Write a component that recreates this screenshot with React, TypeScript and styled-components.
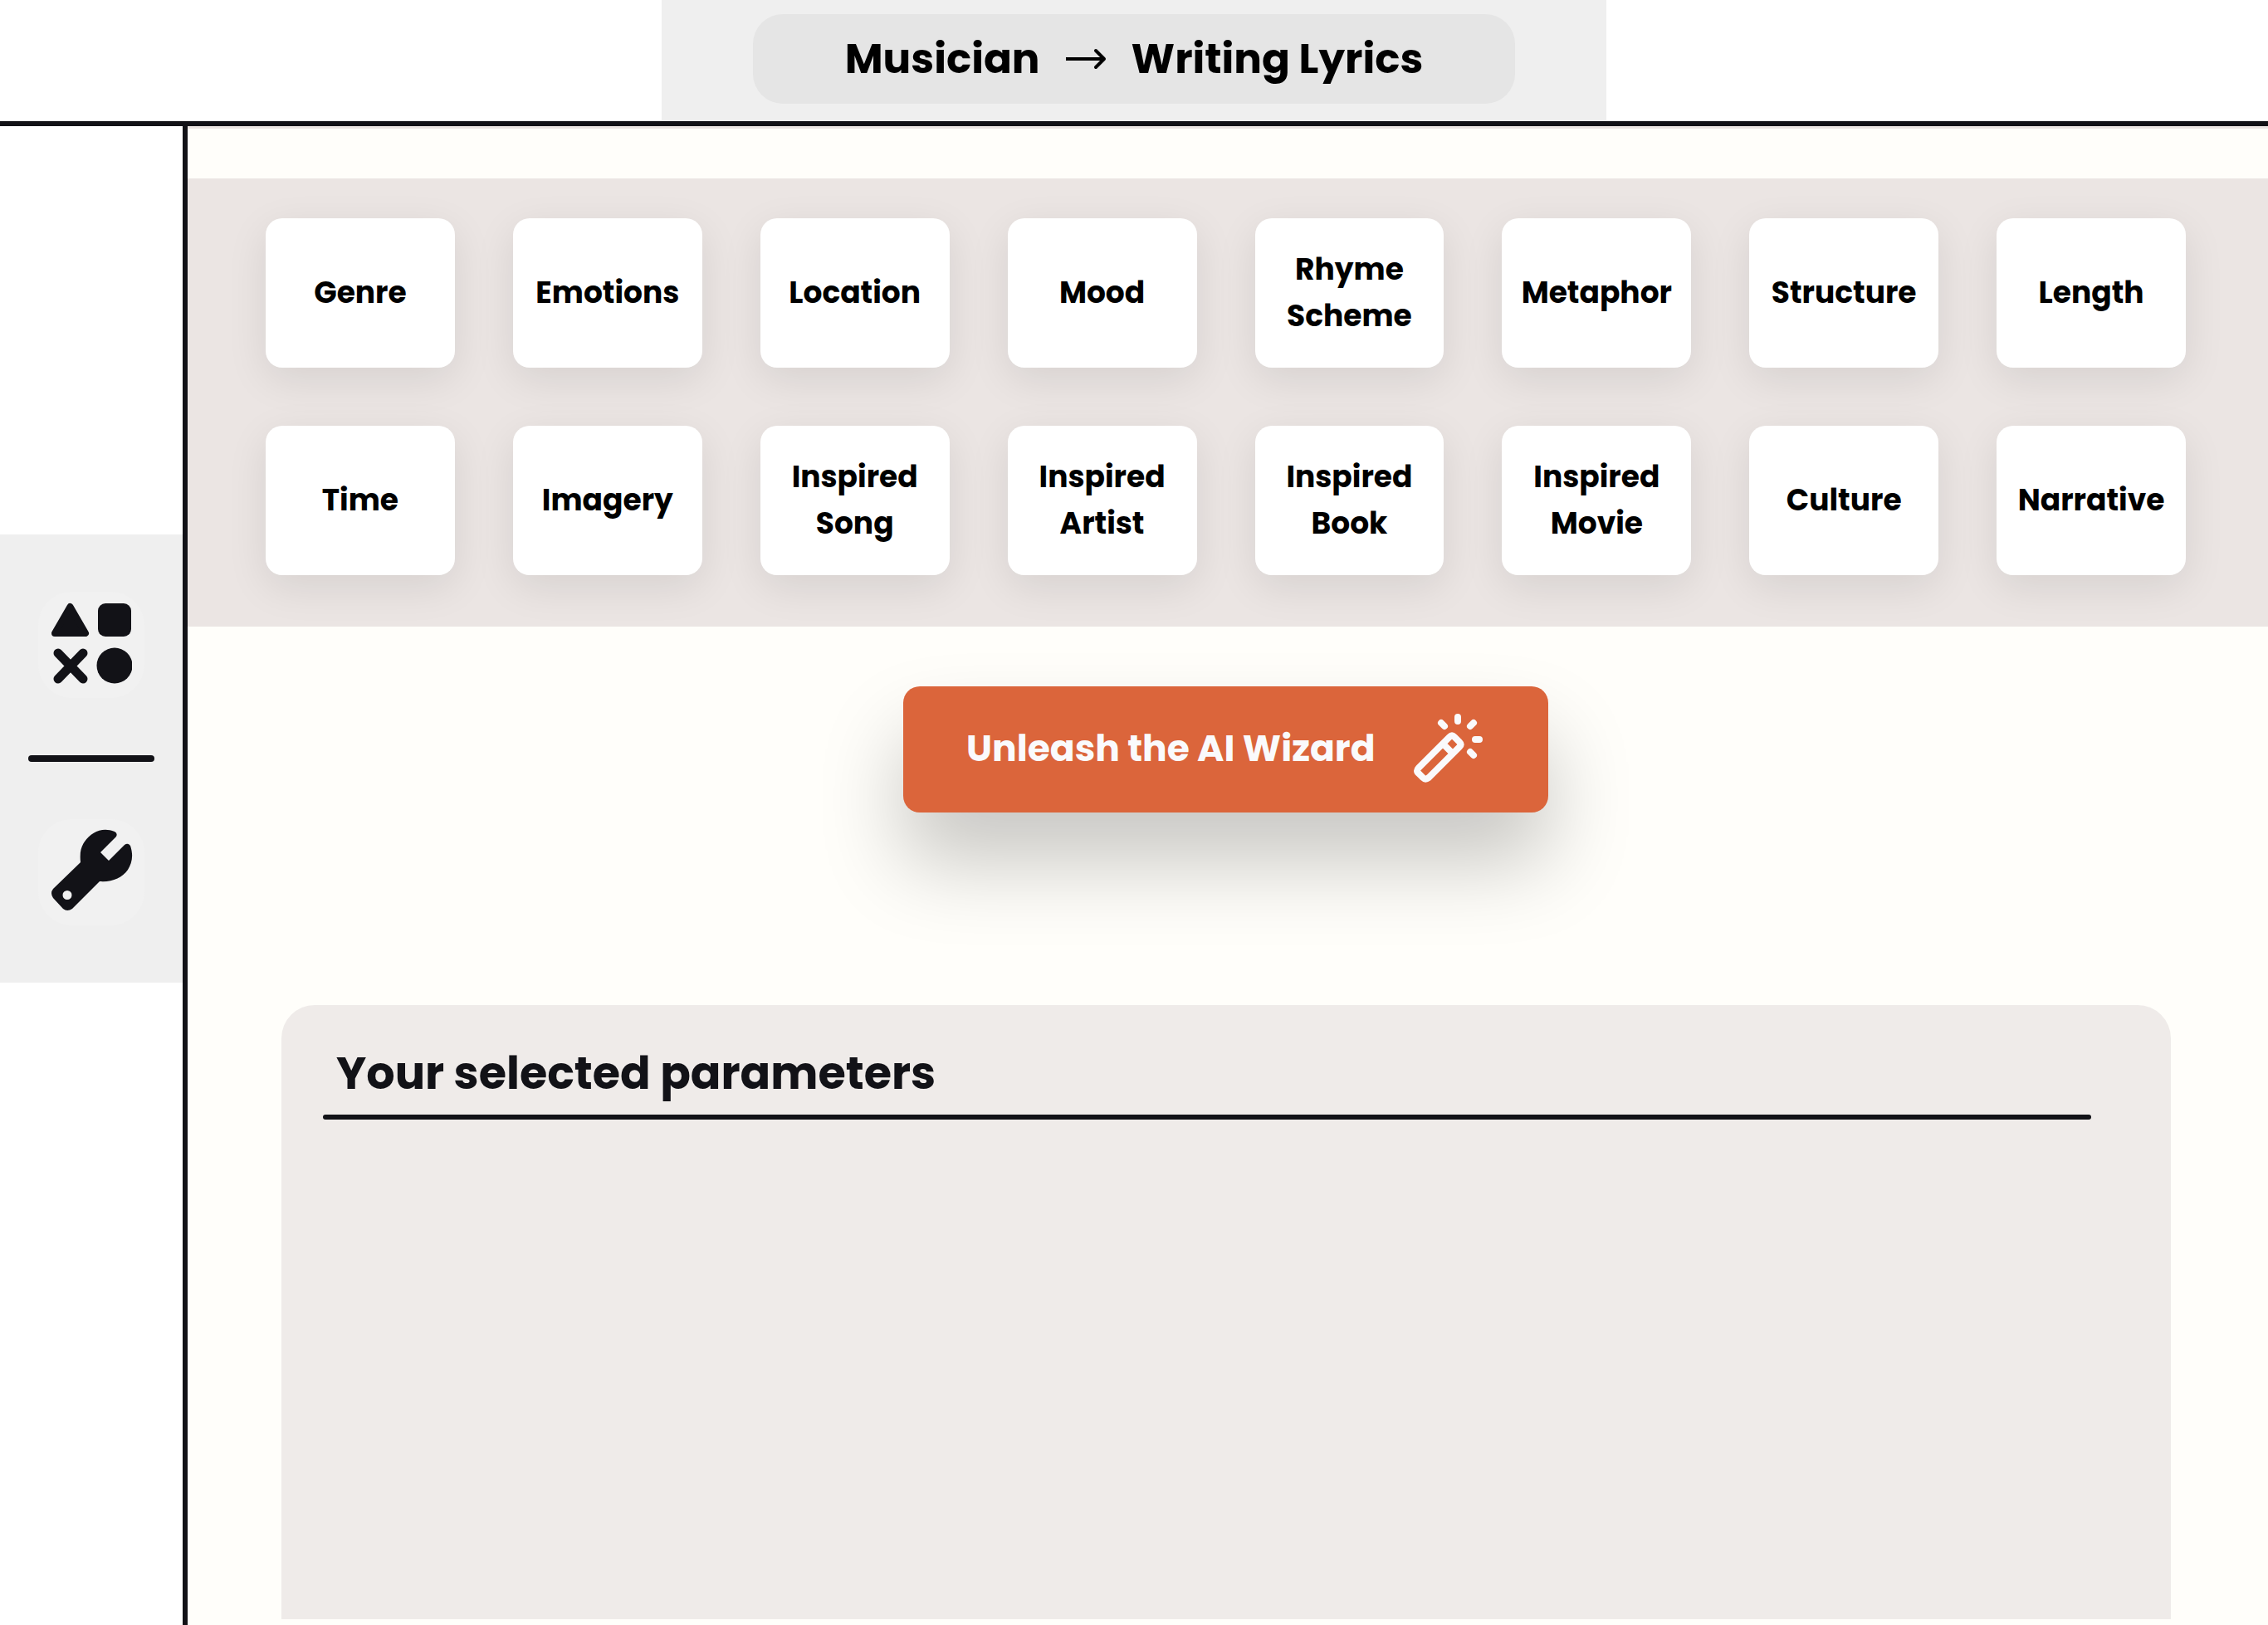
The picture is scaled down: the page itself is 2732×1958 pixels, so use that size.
import React from "react";
import styled, { createGlobalStyle } from "styled-components";

const ink = "#121217";
const cream = "#fffefa";
const sand = "#ebe5e3";

const GlobalStyle = createGlobalStyle`
  *, *::before, *::after { box-sizing: border-box; }
  body {
    margin: 0;
    background: #ffffff;
    color: #000000;
    font-family: Poppins, Inter, "Liberation Sans", sans-serif;
  }
  button { font: inherit; border: 0; cursor: pointer; }
`;

const Page = styled.div`
  display: flex;
  flex-direction: column;
  min-height: 100vh;
`;

const Header = styled.header`
  display: flex;
  justify-content: center;
  border-bottom: 6px solid ${ink};
`;

const HeaderPanel = styled.div`
  padding: 17px 110px 21px;
  background: #efefef;
`;

const Breadcrumb = styled.nav`
  display: flex;
  align-items: center;
  justify-content: center;
  gap: 30px;
  width: 918px;
  height: 108px;
  border-radius: 36px;
  background: #e5e5e5;
  font-size: 50px;
  font-weight: 700;
`;

const Body = styled.div`
  display: flex;
  flex: 1;
`;

const Sidebar = styled.aside`
  flex: none;
  width: 226px;
  padding-top: 492px;
  border-right: 6px solid ${ink};
`;

const ToolPanel = styled.div`
  display: flex;
  flex-direction: column;
  align-items: center;
  justify-content: space-evenly;
  height: 540px;
  background: #efefef;
`;

const ToolButton = styled.button`
  display: grid;
  place-items: center;
  width: 128px;
  height: 128px;
  padding: 0 0 4px;
  border-radius: 40px;
  background: #f1f1f1;
  color: ${ink};
`;

const ToolDivider = styled.hr`
  width: 152px;
  height: 8px;
  margin: 0;
  border: 0;
  border-radius: 4px;
  background: ${ink};
`;

const Main = styled.main`
  display: flex;
  flex: 1;
  flex-direction: column;
  padding-top: 60px;
  border-top: 3px solid ${sand};
  background: ${cream};
`;

const ParameterBand = styled.section`
  display: grid;
  grid-template-columns: repeat(8, 1fr);
  gap: 70px;
  padding: 48px 99px 62px 94px;
  background: ${sand};
`;

const ParameterCard = styled.button`
  height: 180px;
  padding: 0 16px;
  border-radius: 20px;
  background: #ffffff;
  box-shadow: 0 14px 50px rgba(0, 0, 0, 0.09);
  color: #000000;
  font-size: 36px;
  font-weight: 700;
  line-height: 56px;
`;

const ActionRow = styled.div`
  display: flex;
  justify-content: center;
  padding: 72px 99px 232px 94px;
`;

const WizardButton = styled.button`
  display: flex;
  align-items: center;
  justify-content: space-between;
  width: 777px;
  height: 152px;
  padding: 0 78px 4px 76px;
  border-radius: 20px;
  background: #db653b;
  box-shadow: 0 60px 100px rgba(0, 0, 0, 0.22);
  color: #fafafc;
  font-size: 44px;
  font-weight: 700;
`;

const SelectionPanel = styled.section`
  flex: 1;
  min-height: 740px;
  margin: 0 117px 7px 113px;
  padding: 50px 96px 48px 50px;
  border-radius: 40px 40px 0 0;
  background: #efebe9;
`;

const SelectionTitle = styled.h2`
  margin: 0;
  padding: 0 16px 18px;
  color: ${ink};
  font-size: 54px;
  font-weight: 700;
  line-height: 64px;
`;

const SelectionRule = styled.hr`
  height: 6px;
  margin: 0;
  border: 0;
  border-radius: 3px;
  background: ${ink};
`;

const parameters = [
  "Genre", "Emotions", "Location", "Mood",
  "Rhyme Scheme", "Metaphor", "Structure", "Length",
  "Time", "Imagery", "Inspired Song", "Inspired Artist",
  "Inspired Book", "Inspired Movie", "Culture", "Narrative",
];

const ArrowIcon = () => (
  <svg width="50" height="26" viewBox="0 0 50 26" fill="none" stroke="currentColor" strokeWidth="4" aria-hidden="true">
    <path d="M1 13H46" />
    <path d="M37 3L47 13L37 23" strokeLinecap="round" strokeLinejoin="round" />
  </svg>
);

const ShapesIcon = () => (
  <svg width="98" height="98" viewBox="0 0 98 98" fill="currentColor" aria-hidden="true">
    <path d="M23.500 5L42 37H5Z" stroke="currentColor" strokeWidth="8" strokeLinejoin="round" />
    <rect x="57" y="1" width="40" height="40" rx="9" />
    <path d="M9 61L39 92M39 61L9 92" stroke="currentColor" strokeWidth="11" strokeLinecap="round" />
    <circle cx="77" cy="76" r="21.500" />
  </svg>
);

const WrenchIcon = () => (
  <svg width="102" height="102" viewBox="0 0 102 102" fill="currentColor" aria-hidden="true">
    <path
      fillRule="evenodd"
      d="M79 4Q83 6 81 10L62 29L72 39L91 20Q95 17 98 21C102 33 100 42 95 50C88 60 76 65 61 64L28 97Q22 101 17 97L5 84Q1 78 5 73L38 41C37 30 38 23 43 16C51 4 65-2 79 4ZM22 75A5.500 5.500 0 1 0 22 86A5.500 5.500 0 1 0 22 75Z"
    />
  </svg>
);

const WandIcon = () => (
  <svg width="84" height="84" viewBox="0 0 84 84" fill="none" stroke="currentColor" strokeWidth="8" strokeLinecap="round" strokeLinejoin="round" aria-hidden="true">
    <path d="M6 66L43 29Q46 26 49 29L55 35Q58 38 55 41L18 78Q14 81 11 78L6 73Q2 70 6 66ZM36 38L46 48" />
    <path d="M53 5V10M33 12L37 16M72 12L68 16M74 32H79M68 47L72 51" />
  </svg>
);

export default function App() {
  return (
    <Page>
      <GlobalStyle />
      <Header>
        <HeaderPanel>
          <Breadcrumb aria-label="Breadcrumb">
            <span>Musician</span>
            <ArrowIcon />
            <span>Writing Lyrics</span>
          </Breadcrumb>
        </HeaderPanel>
      </Header>
      <Body>
        <Sidebar>
          <ToolPanel>
            <ToolButton type="button" aria-label="Parameters"><ShapesIcon /></ToolButton>
            <ToolDivider />
            <ToolButton type="button" aria-label="Tools"><WrenchIcon /></ToolButton>
          </ToolPanel>
        </Sidebar>
        <Main>
          <ParameterBand aria-label="Parameters">
            {parameters.map((name) => (
              <ParameterCard type="button" key={name}>{name}</ParameterCard>
            ))}
          </ParameterBand>
          <ActionRow>
            <WizardButton type="button">
              Unleash the AI Wizard
              <WandIcon />
            </WizardButton>
          </ActionRow>
          <SelectionPanel aria-labelledby="selection-title">
            <SelectionTitle id="selection-title">Your selected parameters</SelectionTitle>
            <SelectionRule />
          </SelectionPanel>
        </Main>
      </Body>
    </Page>
  );
}
